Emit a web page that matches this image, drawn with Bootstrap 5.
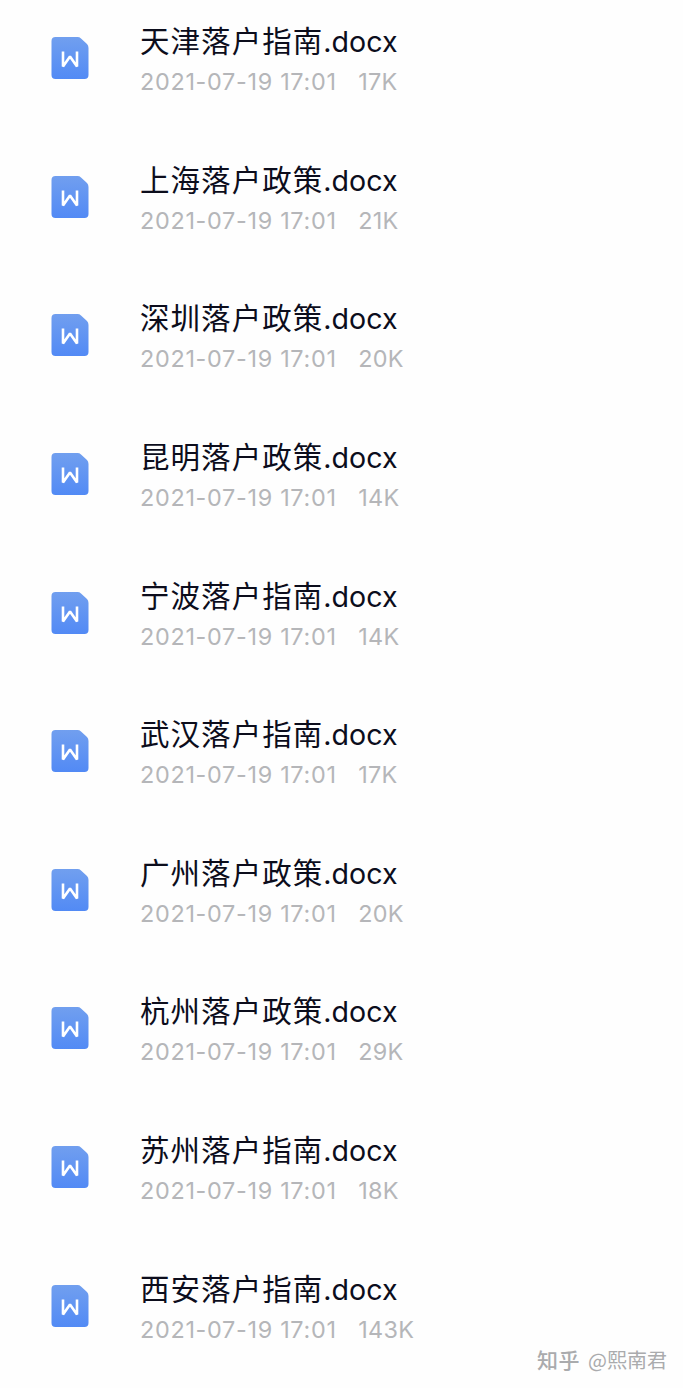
<!DOCTYPE html>
<html lang="zh-CN">
<head>
<meta charset="utf-8">
<meta name="viewport" content="width=device-width, initial-scale=1">
<title>落户指南</title>
<link href="https://cdn.jsdelivr.net/npm/bootstrap@5.3.0/dist/css/bootstrap.min.css" rel="stylesheet">
<style>
body{background:#fefefe;font-family:Inter,"Noto Sans CJK SC",sans-serif;height:1388px;overflow:hidden}
.file-row{height:138.63px;padding:21px 0 0 51px;gap:51px}
.file-icon{width:38px;height:44px;margin-top:15px;flex:none}
.file-name{font-size:28.6px;line-height:36px;color:#0c0d1c;white-space:nowrap}
.zh{font-family:"Noto Sans CJK SC",sans-serif;font-size:29.5px;letter-spacing:1.05px}
.file-meta{font-size:23.4px;line-height:30px;margin-top:7px;letter-spacing:.7px;color:#b5b6b9;white-space:pre}
.file-size{margin-left:21.5px;letter-spacing:.35px}
.watermark{right:16px;bottom:13px;color:#aaabad;font-size:20px;line-height:30px;font-family:"Noto Sans CJK SC",sans-serif}
.zhihu{font-size:21px;line-height:28px;font-weight:500;letter-spacing:.5px}
</style>
</head>
<body class="position-relative">
<svg class="position-absolute" width="0" height="0"><defs>
<linearGradient id="blue" x1="0" y1="0" x2="0" y2="1"><stop offset="0" stop-color="#719fef"/><stop offset="1" stop-color="#528af5"/></linearGradient>
</defs></svg>
<main id="files"></main>
<div class="watermark position-absolute d-flex gap-2"><span class="zhihu">知乎</span><span>@熙南君</span></div>
<script src="https://cdn.jsdelivr.net/npm/bootstrap@5.3.0/dist/js/bootstrap.bundle.min.js"></script>
<script>
const files=[["天津落户指南","17K"],["上海落户政策","21K"],["深圳落户政策","20K"],["昆明落户政策","14K"],["宁波落户指南","14K"],["武汉落户指南","17K"],["广州落户政策","20K"],["杭州落户政策","29K"],["苏州落户指南","18K"],["西安落户指南","143K"]];
document.getElementById("files").innerHTML=files.map(([n,s])=>`
<div class="file-row d-flex align-items-start">
<svg class="file-icon" viewBox="0 0 38 44"><path d="M4.500 1H26.500Q28.500 1 30 2.400L36 8Q37.500 9.500 37.500 12V39Q37.500 43 33.500 43H4.500Q.5 43 .5 39V5Q.5 1 4.500 1Z" fill="url(#blue)"/><path d="M12 15.500V30.600L19 20.500L26 30.600V15.500" fill="none" stroke="#fff" stroke-width="2.600" stroke-linejoin="bevel"/></svg>
<div><div class="file-name"><span class="zh">${n}</span><span>.docx</span></div>
<div class="file-meta d-flex"><span>2021-07-19 17:01</span><span class="file-size">${s}</span></div></div>
</div>`).join("");
</script>
</body>
</html>
